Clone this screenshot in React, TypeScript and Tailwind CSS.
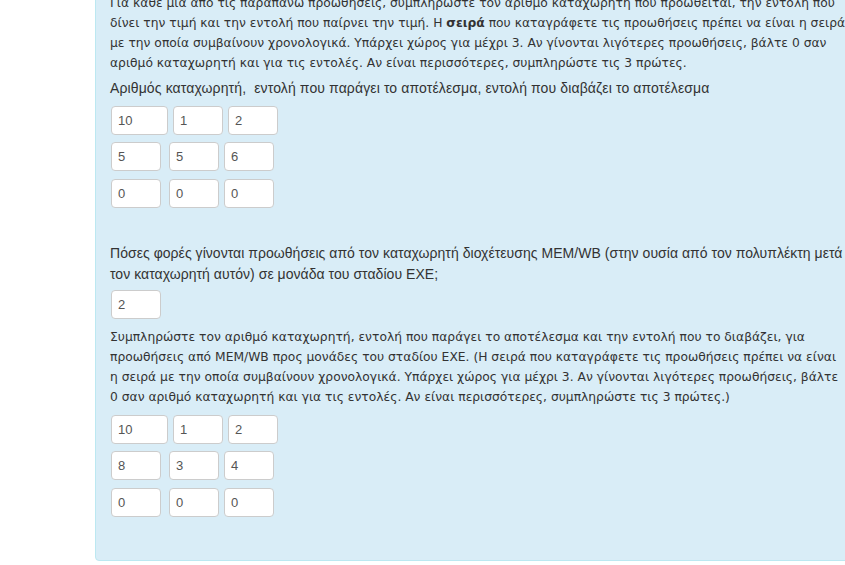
import React from "react";

const verdana = { fontFamily: "'DejaVu Sans', Verdana, sans-serif" };
const arial = { fontFamily: "'Liberation Sans', Arial, sans-serif" };

function Box({ v, w = 50, ml = 0 }: { v: string; w?: number; ml?: number }) {
  return (
    <div
      className="h-[29px] shrink-0 rounded-[4px] border border-[#cccccc] bg-white pl-[6px] flex items-center text-[13px] text-[#555555]"
      style={{ width: w, marginLeft: ml, ...arial }}
    >
      {v}
    </div>
  );
}

function Grid({ rows }: { rows: string[][] }) {
  return (
    <div className="ml-px flex flex-col">
      <div className="flex">
        <Box v={rows[0][0]} w={57} />
        <Box v={rows[0][1]} ml={5} />
        <Box v={rows[0][2]} ml={5} />
      </div>
      <div className="mt-[7px] flex">
        <Box v={rows[1][0]} />
        <Box v={rows[1][1]} ml={8} />
        <Box v={rows[1][2]} ml={5} />
      </div>
      <div className="mt-[8px] flex">
        <Box v={rows[2][0]} />
        <Box v={rows[2][1]} ml={8} />
        <Box v={rows[2][2]} ml={5} />
      </div>
    </div>
  );
}

export default function App() {
  return (
    <div className="relative h-[565px] w-[845px] overflow-hidden bg-white">
      <div className="pl-[95px]">
        <div className="mt-[-23px] w-[800px] rounded-[4px] border border-[#bce8f1] bg-[#d9edf7] pl-[14px] pt-[15px] pb-[43px] text-[#333333]">
          <div className="whitespace-nowrap text-[12.3px] leading-[20px]" style={verdana}>
            <div>Για κάθε μία από τις παραπάνω προωθήσεις, συμπληρώστε τον αριθμό καταχωρητή που προωθείται, την εντολή που</div>
            <div>
              δίνει την τιμή και την εντολή που παίρνει την τιμή. Η <b>σειρά</b> που καταγράφετε τις προωθήσεις πρέπει να είναι η σειρά
            </div>
            <div>με την οποία συμβαίνουν χρονολογικά. Υπάρχει χώρος για μέχρι 3. Αν γίνονται λιγότερες προωθήσεις, βάλτε 0 σαν</div>
            <div>αριθμό καταχωρητή και για τις εντολές. Αν είναι περισσότερες, συμπληρώστε τις 3 πρώτες.</div>
          </div>
          <div className="mt-[5px] whitespace-pre text-[14px] leading-[20px] tracking-[0.12px]" style={arial}>
            Αριθμός καταχωρητή,  εντολή που παράγει το αποτέλεσμα, εντολή που διαβάζει το αποτέλεσμα
          </div>
          <div className="mt-[8px]">
            <Grid
              rows={[
                ["10", "1", "2"],
                ["5", "5", "6"],
                ["0", "0", "0"],
              ]}
            />
          </div>
          <div className="mt-[35px] whitespace-nowrap text-[14px] leading-[21px] tracking-[0.04px]" style={arial}>
            <div>Πόσες φορές γίνονται προωθήσεις από τον καταχωρητή διοχέτευσης MEM/WB (στην ουσία από τον πολυπλέκτη μετά</div>
            <div>τον καταχωρητή αυτόν) σε μονάδα του σταδίου EXE;</div>
          </div>
          <div className="ml-px mt-[5px]">
            <Box v="2" />
          </div>
          <div className="mt-[8px] whitespace-nowrap text-[12.3px] leading-[20px]" style={verdana}>
            <div>Συμπληρώστε τον αριθμό καταχωρητή, εντολή που παράγει το αποτέλεσμα και την εντολή που το διαβάζει, για</div>
            <div>προωθήσεις από MEM/WB προς μονάδες του σταδίου EXE. (Η σειρά που καταγράφετε τις προωθήσεις πρέπει να είναι</div>
            <div>η σειρά με την οποία συμβαίνουν χρονολογικά. Υπάρχει χώρος για μέχρι 3. Αν γίνονται λιγότερες προωθήσεις, βάλτε</div>
            <div>0 σαν αριθμό καταχωρητή και για τις εντολές. Αν είναι περισσότερες, συμπληρώστε τις 3 πρώτες.)</div>
          </div>
          <div className="mt-[8px]">
            <Grid
              rows={[
                ["10", "1", "2"],
                ["8", "3", "4"],
                ["0", "0", "0"],
              ]}
            />
          </div>
        </div>
      </div>
    </div>
  );
}
